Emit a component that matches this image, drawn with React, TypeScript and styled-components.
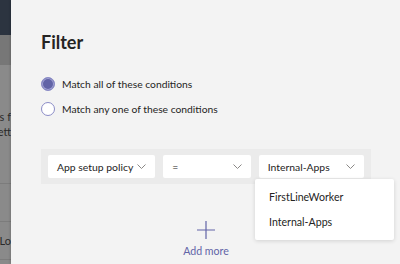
import React from "react";
import styled, { createGlobalStyle } from "styled-components";

const Global = createGlobalStyle`
  html, body { margin: 0; padding: 0; }
  body { width: 400px; height: 264px; overflow: hidden; font-family: "Lato", "Open Sans", sans-serif; }
`;

const Page = styled.div`
  display: flex;
  width: 400px;
  height: 264px;
  overflow: hidden;
`;

const Backdrop = styled.div`
  width: 11px;
  flex: none;
  display: flex;
  flex-direction: column;
  background: #8a8a8a;
  overflow: hidden;
  font-size: 11px;
  color: #2a2a2a;
  white-space: nowrap;
`;

const BackHeader = styled.div`
  height: 35px;
  background: #2c3440;
`;

const BackBand = styled.div`
  height: 30px;
  background: #777777;
`;

const BackBlock = styled.div<{ $h: number }>`
  height: ${(p) => p.$h}px;
  border-bottom: 1px solid #7c7c7c;
  display: flex;
  flex-direction: column;
  justify-content: center;
  line-height: 15px;
  direction: rtl;
`;

const Panel = styled.div`
  flex: 1;
  position: relative;
  background: #f3f3f3;
  box-shadow: -1px 0 2px rgba(0, 0, 0, 0.15);
  padding: 30px 0 0 30px;
  color: #252423;
`;

const Title = styled.h1`
  margin: 0;
  font-size: 18px;
  line-height: 24px;
  font-weight: 700;
`;

const RadioList = styled.div`
  margin-top: 22px;
  display: flex;
  flex-direction: column;
  gap: 9px;
`;

const RadioRow = styled.label`
  display: flex;
  align-items: center;
  gap: 7px;
  font-size: 10.3px;
  line-height: 16px;
`;

const RadioDot = styled.span<{ $checked?: boolean }>`
  width: 14px;
  height: 14px;
  box-sizing: border-box;
  border-radius: 50%;
  border: 1px solid #8b8cc7;
  background: ${(p) => (p.$checked ? "#6264a7" : "#ffffff")};
  box-shadow: ${(p) => (p.$checked ? "inset 0 0 0 1px #a3a4d4" : "none")};
`;

const FilterRow = styled.div`
  margin-top: 32px;
  width: 330px;
  box-sizing: border-box;
  background: #ebebeb;
  padding: 6px 7px;
  display: flex;
  gap: 8px;
`;

const Select = styled.div<{ $w: number }>`
  width: ${(p) => p.$w}px;
  height: 23px;
  box-sizing: border-box;
  background: #ffffff;
  border-radius: 2px;
  display: flex;
  align-items: center;
  justify-content: space-between;
  padding: 0 9px 0 9px;
  font-size: 10.4px;
  white-space: nowrap;
`;

const Chevron = () => (
  <svg width="9" height="5" viewBox="0 0 9 5" fill="none">
    <path d="M0.5 0.5 L4.5 4.5 L8.5 0.5" stroke="#8a8886" strokeWidth="1" />
  </svg>
);

const Menu = styled.div`
  position: absolute;
  left: 244px;
  top: 179px;
  width: 139px;
  height: 61px;
  background: #ffffff;
  border-radius: 2px;
  box-shadow: 0 1px 4px rgba(0, 0, 0, 0.14);
  display: flex;
  flex-direction: column;
  justify-content: center;
  padding-top: 1px;
  box-sizing: border-box;
`;

const MenuItem = styled.div`
  font-size: 10.6px;
  line-height: 25px;
  padding-left: 14px;
`;

const AddMore = styled.div`
  width: 330px;
  margin-top: 37px;
  display: flex;
  flex-direction: column;
  align-items: center;
  gap: 6px;
  color: #6264a7;
  font-size: 10.6px;
`;

export default function App() {
  return (
    <>
      <Global />
      <Page>
        <Backdrop>
          <BackHeader />
          <BackBand />
          <BackBlock $h={118}>
            <span>tips f</span>
            <span>sett</span>
          </BackBlock>
          <BackBlock $h={37} />
          <BackBlock $h={37}>
            <span>Lo</span>
          </BackBlock>
        </Backdrop>
        <Panel>
          <Title>Filter</Title>
          <RadioList>
            <RadioRow>
              <RadioDot $checked />
              Match all of these conditions
            </RadioRow>
            <RadioRow>
              <RadioDot />
              Match any one of these conditions
            </RadioRow>
          </RadioList>
          <FilterRow>
            <Select $w={108}>
              App setup policy
              <Chevron />
            </Select>
            <Select $w={88}>
              =
              <Chevron />
            </Select>
            <Select $w={106}>
              Internal-Apps
              <Chevron />
            </Select>
          </FilterRow>
          <AddMore>
            <svg width="18" height="18" viewBox="0 0 18 18">
              <path d="M9 0 V18 M0 9 H18" stroke="#6264a7" strokeWidth="1.2" />
            </svg>
            Add more
          </AddMore>
          <Menu>
            <MenuItem>FirstLineWorker</MenuItem>
            <MenuItem>Internal-Apps</MenuItem>
          </Menu>
        </Panel>
      </Page>
    </>
  );
}
